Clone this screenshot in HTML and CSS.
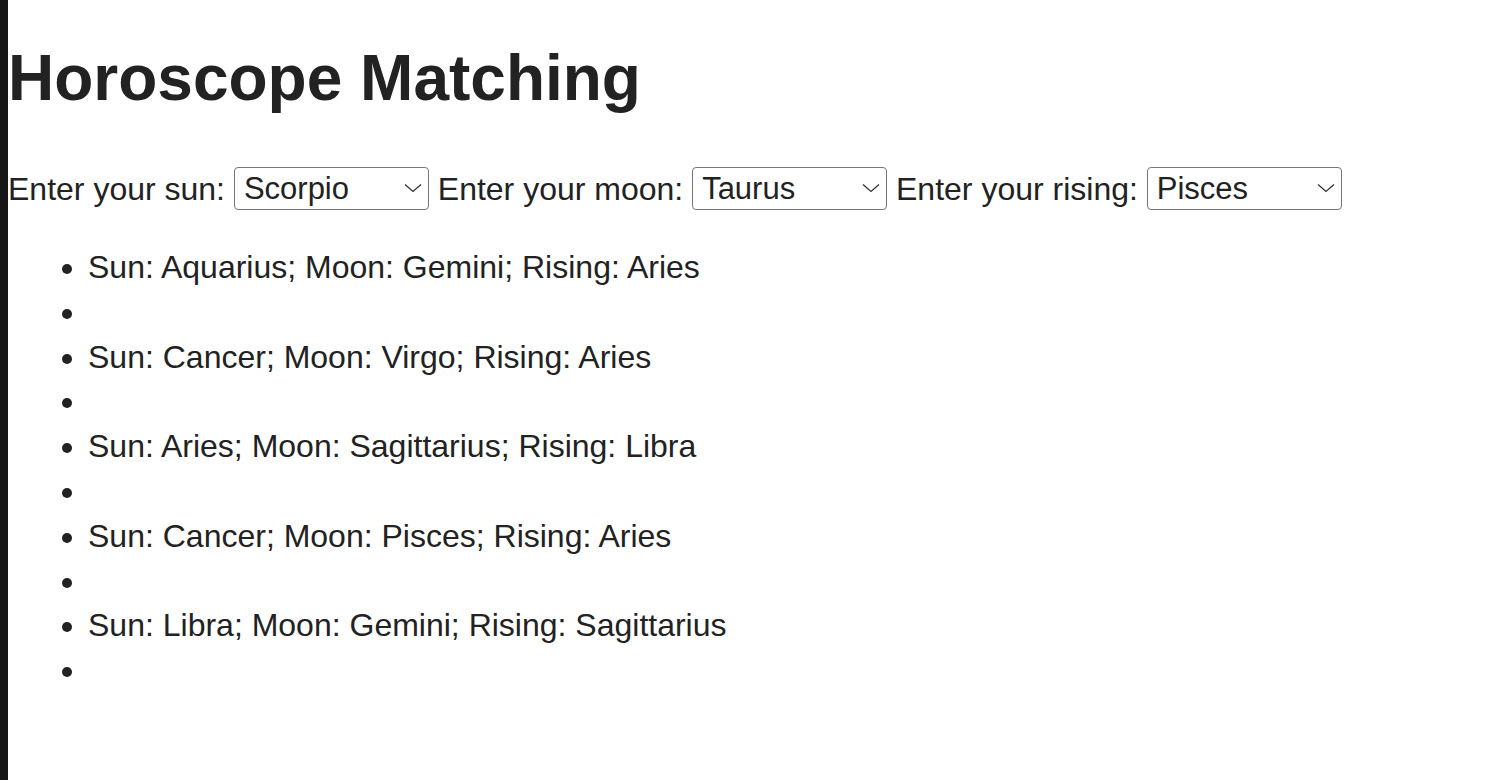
FILE: index.html
```html
<!DOCTYPE html>
<html lang="en">
<head>
<meta charset="utf-8">
<title>Horoscope Matching</title>
<link rel="stylesheet" href="styles.css">
</head>
<body>
<div class="page">
  <h1 class="title">Horoscope Matching</h1>
  <div class="form-row">
    <label class="field">Enter your sun: <span class="select-wrap"><select class="sign-select"><option>Scorpio</option></select><svg class="chev" width="18" height="10" viewBox="0 0 18 10"><path d="M1 1.5 L9 8.5 L17 1.5" fill="none" stroke="#333" stroke-width="1.3"/></svg></span></label>
    <label class="field">Enter your moon: <span class="select-wrap"><select class="sign-select"><option>Taurus</option></select><svg class="chev" width="18" height="10" viewBox="0 0 18 10"><path d="M1 1.5 L9 8.5 L17 1.5" fill="none" stroke="#333" stroke-width="1.3"/></svg></span></label>
    <label class="field">Enter your rising: <span class="select-wrap"><select class="sign-select"><option>Pisces</option></select><svg class="chev" width="18" height="10" viewBox="0 0 18 10"><path d="M1 1.5 L9 8.5 L17 1.5" fill="none" stroke="#333" stroke-width="1.3"/></svg></span></label>
  </div>
  <ul class="matches">
    <li>Sun: Aquarius; Moon: Gemini; Rising: Aries</li>
    <li></li>
    <li>Sun: Cancer; Moon: Virgo; Rising: Aries</li>
    <li></li>
    <li>Sun: Aries; Moon: Sagittarius; Rising: Libra</li>
    <li></li>
    <li>Sun: Cancer; Moon: Pisces; Rising: Aries</li>
    <li></li>
    <li>Sun: Libra; Moon: Gemini; Rising: Sagittarius</li>
    <li></li>
  </ul>
</div>
</body>
</html>
```
FILE: styles.css
```css
html, body {
  margin: 0;
  padding: 0;
  background: #ffffff;
}
body {
  border-left: 8px solid #161616;
  min-height: 780px;
  box-sizing: border-box;
  font-family: "Liberation Sans", Arial, Helvetica, sans-serif;
  font-size: 32px;
  color: #222222;
}
.page {
  padding-top: 1px;
}
.title {
  font-size: 64px;
  font-weight: bold;
  margin: 40px 0 0 0;
  line-height: 74px;
}
.form-row {
  margin-top: 52px;
  line-height: 45px;
}
.field {
  white-space: nowrap;
}
.select-wrap {
  position: relative;
  display: inline-block;
  vertical-align: middle;
  margin-top: -6px;
}
.sign-select {
  appearance: none;
  -webkit-appearance: none;
  width: 195px;
  height: 43px;
  box-sizing: border-box;
  border: 1px solid #767676;
  border-radius: 4px;
  background: #ffffff;
  font-family: "Liberation Sans", Arial, Helvetica, sans-serif;
  font-size: 31px;
  color: #222222;
  padding: 0 0 0 9px;
  margin: 0;
  display: block;
}
.chev {
  position: absolute;
  right: 7px;
  top: 16px;
  pointer-events: none;
}
.matches {
  margin: 33px 0 0 0;
  padding-left: 80px;
  line-height: 44.8px;
}
.matches li {
  min-height: 44.8px;
}
```
